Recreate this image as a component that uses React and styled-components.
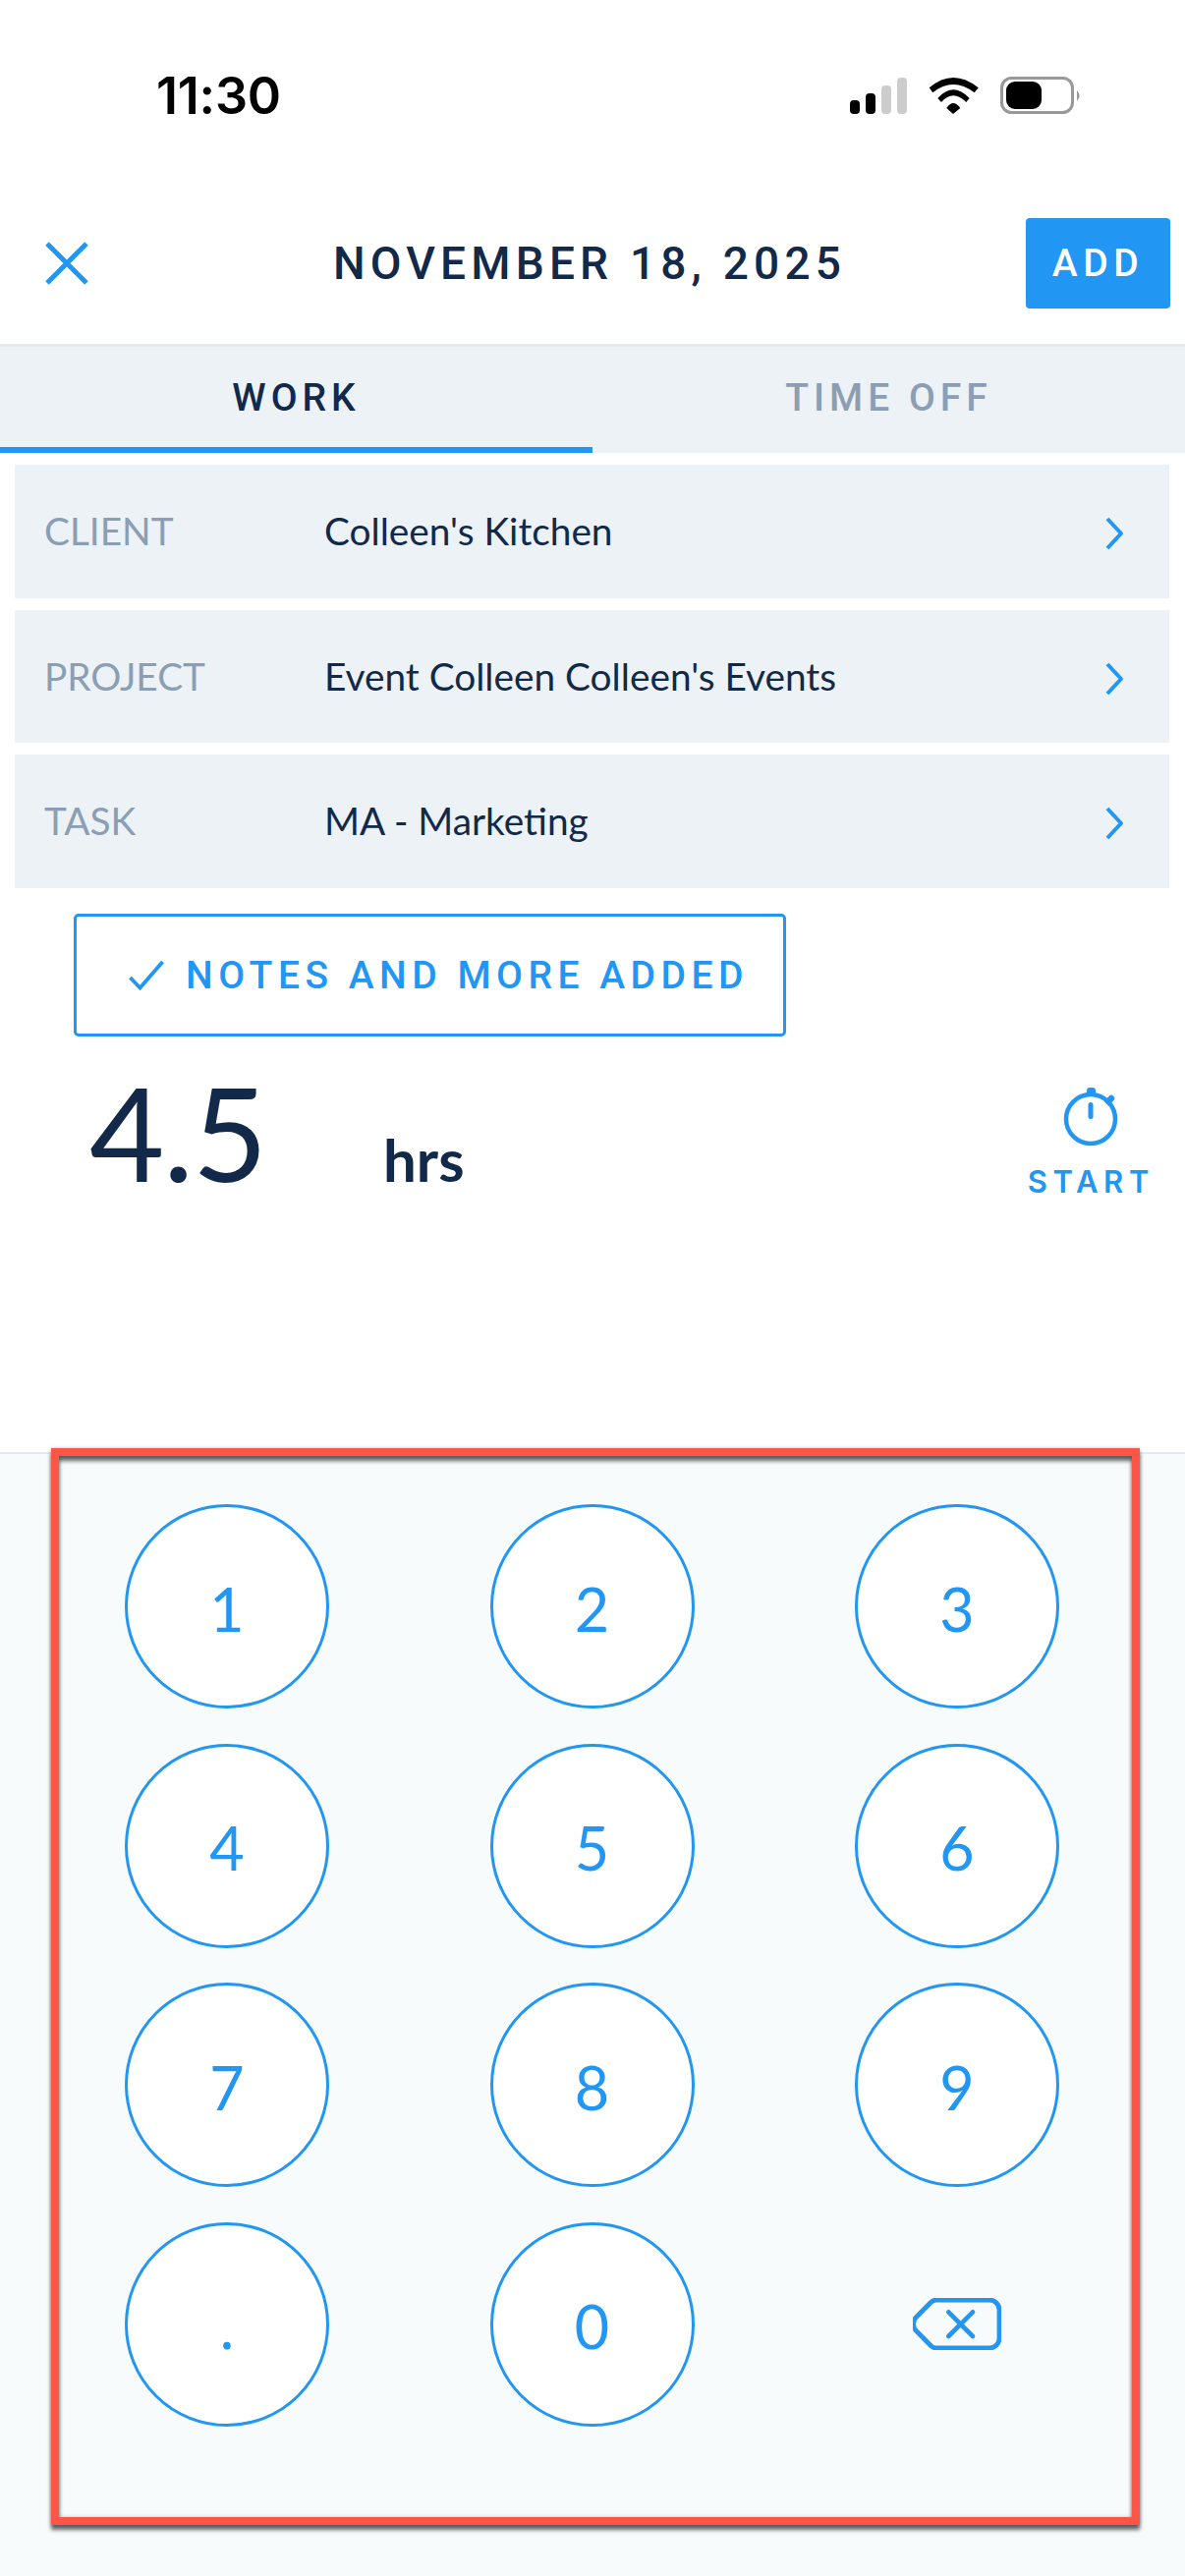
import React from "react";
import styled, { createGlobalStyle } from "styled-components";

const BLUE = "#2196f3";
const NAVY = "#12294a";
const GREY = "#8b9eb3";
const PALE = "#edf2f6";

const Global = createGlobalStyle`
  html, body { margin: 0; padding: 0; background: #fff; }
  * { box-sizing: border-box; }
`;

const Page = styled.div`
  width: 1206px;
  height: 2622px;
  display: flex;
  flex-direction: column;
  background: #fff;
  overflow: hidden;
  font-family: Lato, sans-serif;
  text-rendering: optimizeLegibility;
`;

const StatusBar = styled.div`
  height: 222px;
  padding: 68px 101px 0 159px;
  display: flex;
  justify-content: space-between;
  align-items: flex-start;
  flex: none;
`;

const Clock = styled.div`
  font-family: Inter, sans-serif;
  font-weight: 600;
  font-size: 52px;
  line-height: 60px;
  color: #000;
  letter-spacing: -0.2px;
`;

const StatusIcons = styled.svg`
  width: 240px;
  height: 42px;
  margin-top: 8px;
`;

const Header = styled.header`
  height: 131px;
  flex: none;
  padding: 0 15px 0 46px;
  display: flex;
  align-items: flex-start;
  justify-content: space-between;
  border-bottom: 3px solid #e3e9ef;
`;

const CloseIcon = styled.svg`
  width: 44px;
  height: 44px;
  margin-top: 24px;
  flex: none;
`;

const Title = styled.h1`
  margin: 21px 0 0 0;
  flex: 1;
  text-align: center;
  font-family: Roboto, sans-serif;
  font-weight: 500;
  font-size: 46px;
  line-height: 50px;
  letter-spacing: 5.2px;
  color: ${NAVY};
  padding-left: 66px;
`;

const AddButton = styled.button`
  width: 147px;
  height: 92px;
  flex: none;
  border: 0;
  border-radius: 4px;
  background: ${BLUE};
  color: #fff;
  font-family: Roboto, sans-serif;
  font-weight: 500;
  font-size: 39px;
  letter-spacing: 5.5px;
  padding: 0;
`;

const Tabs = styled.nav`
  height: 108px;
  flex: none;
  display: grid;
  grid-template-columns: 603px 1fr;
  background: ${PALE};
`;

const Tab = styled.div`
  display: flex;
  align-items: center;
  justify-content: center;
  padding-top: 2px;
  font-family: Roboto, sans-serif;
  font-weight: 500;
  font-size: 39px;
  letter-spacing: 5px;
  color: ${(p) => (p.$active ? NAVY : GREY)};
  border-bottom: 6px solid ${(p) => (p.$active ? BLUE : "transparent")};
`;

const Rows = styled.div`
  margin: 12px 16px 0 15px;
  display: flex;
  flex-direction: column;
  gap: 12px;
  flex: none;
`;

const Row = styled.div`
  height: 136px;
  padding: 0 46px 2px 30px;
  display: flex;
  align-items: center;
  background: ${PALE};
  &:nth-child(2) {
    height: 135px;
  }
`;

const RowLabel = styled.span`
  width: 285px;
  font-size: 38.8px;
  font-weight: 400;
  color: ${GREY};
`;

const RowValue = styled.span`
  flex: 1;
  font-size: 38.8px;
  font-weight: 400;
  color: ${NAVY};
`;

const Chevron = styled.svg`
  width: 20px;
  height: 34px;
  margin-top: 6px;
  flex: none;
`;

const NotesButton = styled.button`
  margin: 26px 0 0 75px;
  width: 725px;
  height: 125px;
  flex: none;
  display: flex;
  align-items: center;
  gap: 22px;
  padding: 0 0 0 53px;
  background: #fff;
  border: 3px solid ${BLUE};
  border-radius: 5px;
  color: ${BLUE};
  font-family: Roboto, sans-serif;
  font-weight: 500;
  font-size: 39px;
  letter-spacing: 5.5px;
`;

const Check = styled.svg`
  width: 36px;
  height: 30px;
  flex: none;
`;

const HoursRow = styled.div`
  flex: none;
  height: 170px;
  padding: 22px 31px 0 91px;
  display: flex;
  align-items: flex-start;
`;

const Hours = styled.div`
  width: 299px;
  font-size: 132px;
  line-height: 150px;
  letter-spacing: -1.5px;
  color: ${NAVY};
`;

const HoursUnit = styled.div`
  flex: 1;
  font-size: 60px;
  font-weight: 700;
  line-height: 70px;
  margin-top: 68px;
  color: ${NAVY};
`;

const Start = styled.div`
  display: flex;
  flex-direction: column;
  align-items: center;
  gap: 20px;
  margin-top: 28px;
  font-family: Inter, sans-serif;
  font-weight: 600;
  font-size: 31px;
  line-height: 31px;
  letter-spacing: 5.6px;
  color: ${BLUE};
`;

const StartIcon = styled.svg`
  width: 60px;
  height: 62px;
`;

const Spacer = styled.div`
  flex: 1;
`;

const KeypadArea = styled.section`
  flex: none;
  height: 1144px;
  padding: 0 46px 52px 52px;
  background: #f7fbfc;
  border-top: 2px solid #e3e9ef;
  display: flex;
`;

const Frame = styled.div`
  flex: 1;
  margin-top: -6px;
  border: 8px solid #ff5546;
  box-shadow: 0 5px 4px rgba(0, 0, 0, 0.6), inset 0 5px 4px rgba(0, 0, 0, 0.6),
    0 0 4px rgba(0, 0, 0, 0.2), inset 0 0 4px rgba(0, 0, 0, 0.2);
  padding: 49px 74px 0 67px;
`;

const Keys = styled.div`
  display: grid;
  grid-template-columns: repeat(3, 208px);
  grid-auto-rows: 208px;
  column-gap: 163.5px;
  row-gap: 35.5px;
`;

const Key = styled.button`
  width: 208px;
  height: 208px;
  border-radius: 50%;
  border: 3px solid ${BLUE};
  background: #fff;
  color: ${BLUE};
  font-family: Lato, sans-serif;
  font-size: 61px;
  font-weight: 400;
  padding: 4px 0 0;
`;

const BackKey = styled.button`
  width: 208px;
  height: 208px;
  background: none;
  border: 0;
  padding: 0;
  display: flex;
  align-items: center;
  justify-content: center;
`;

const BackIcon = styled.svg`
  width: 90px;
  height: 53px;
`;

const rows = [
  ["CLIENT", "Colleen's Kitchen"],
  ["PROJECT", "Event Colleen Colleen's Events"],
  ["TASK", "MA - Marketing"],
];

export default function App() {
  return (
    <Page>
      <Global />
      <StatusBar>
        <Clock>11:30</Clock>
        <StatusIcons viewBox="0 0 240 42">
          <rect x="0" y="26" width="10" height="14" rx="4" fill="#000" />
          <rect x="16" y="19" width="10" height="21" rx="4" fill="#000" />
          <rect x="32" y="11" width="10" height="29" rx="4" fill="#ccc" />
          <rect x="48" y="3" width="10" height="37" rx="4" fill="#ccc" />
          <path d="M80.7 13.3 Q105 -7.3 130.7 13.3 L126.7 18.3 Q105 1.7 84.3 18.3 Z" fill="#000" />
          <path d="M89.3 24 Q105 6.6 121.7 24 L118.3 28 Q105 14.6 93 28 Z" fill="#000" />
          <path d="M98.3 34 Q105 24 112.3 34 L105 40 Z" fill="#000" />
          <rect x="154.5" y="3.5" width="72" height="35" rx="10" fill="none" stroke="#999" strokeWidth="3" />
          <rect x="159" y="7" width="36" height="28" rx="9" fill="#000" />
          <path d="M231 16 Q236 21.5 231 27 Z" fill="#999" />
        </StatusIcons>
      </StatusBar>
      <Header>
        <CloseIcon viewBox="0 0 44 44">
          <path d="M2 2 L42 42 M42 2 L2 42" stroke={BLUE} strokeWidth="5" />
        </CloseIcon>
        <Title>NOVEMBER 18, 2025</Title>
        <AddButton>ADD</AddButton>
      </Header>
      <Tabs>
        <Tab $active>WORK</Tab>
        <Tab>TIME OFF</Tab>
      </Tabs>
      <Rows>
        {rows.map(([l, v]) => (
          <Row key={l}>
            <RowLabel>{l}</RowLabel>
            <RowValue>{v}</RowValue>
            <Chevron viewBox="0 0 20 34">
              <path d="M3 2 L17 17 L3 32" fill="none" stroke={BLUE} strokeWidth="4" strokeLinejoin="round" />
            </Chevron>
          </Row>
        ))}
      </Rows>
      <NotesButton>
        <Check viewBox="0 0 36 30">
          <path d="M1.5 17 L11.5 27.5 L34.5 1" fill="none" stroke={BLUE} strokeWidth="3.8" />
        </Check>
        NOTES AND MORE ADDED
      </NotesButton>
      <HoursRow>
        <Hours>4.5</Hours>
        <HoursUnit>hrs</HoursUnit>
        <Start>
          <StartIcon viewBox="0 0 60 62">
            <circle cx="30" cy="34" r="25" fill="none" stroke={BLUE} strokeWidth="4.5" />
            <rect x="26" y="2" width="9" height="8" rx="3" fill={BLUE} />
            <path d="M48 16 L51 13" stroke={BLUE} strokeWidth="6.5" strokeLinecap="round" />
            <path d="M30 19.5 V31.5" stroke={BLUE} strokeWidth="5" strokeLinecap="round" />
          </StartIcon>
          START
        </Start>
      </HoursRow>
      <Spacer />
      <KeypadArea>
        <Frame>
          <Keys>
            {["1", "2", "3", "4", "5", "6", "7", "8", "9", ".", "0"].map((k) => (
              <Key key={k}>{k}</Key>
            ))}
            <BackKey>
              <BackIcon viewBox="0 0 90 53">
                <path
                  d="M24 2 H78 a10 10 0 0 1 10 10 V41 a10 10 0 0 1 -10 10 H24 a8 8 0 0 1 -5.5 -2.2 L4 34 a10 10 0 0 1 0 -15 L18.5 4.2 a8 8 0 0 1 5.5 -2.2 Z"
                  fill="none"
                  stroke={BLUE}
                  strokeWidth="4.8"
                />
                <path d="M36.3 14.3 L61 39 M61 14.3 L36.3 39" stroke={BLUE} strokeWidth="4.6" strokeLinecap="round" />
              </BackIcon>
            </BackKey>
          </Keys>
        </Frame>
      </KeypadArea>
    </Page>
  );
}
